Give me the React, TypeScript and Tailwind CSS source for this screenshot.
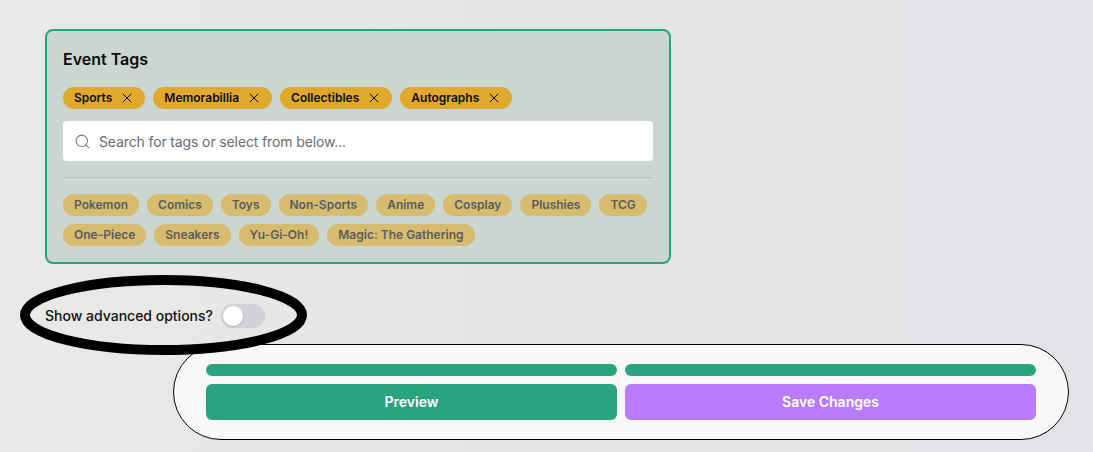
import { Search, X } from 'lucide-react';

const selected = ['Sports', 'Memorabillia', 'Collectibles', 'Autographs'];
const available = ['Pokemon', 'Comics', 'Toys', 'Non-Sports', 'Anime', 'Cosplay', 'Plushies', 'TCG', 'One-Piece', 'Sneakers', 'Yu-Gi-Oh!', 'Magic: The Gathering'];

export default function App() {
  return (
    <div className="relative h-[452px] w-[1093px] overflow-hidden bg-gradient-to-r from-[#e9e9e7] via-[#e4e4e4] to-[#e2e3e7] font-['Inter',sans-serif] pt-[29px]">
      <div className="ml-[45px] h-[235px] w-[626px] rounded-lg border-2 border-[#2aa37f] bg-[#ccd6d1] px-4 pt-[17px]">
        <h2 className="text-base leading-[22px] font-semibold text-[#0a0b0c]">Event Tags</h2>
        <div className="mt-[17px] flex gap-2">
          {selected.map(tag => (
            <span key={tag} className="flex h-[22px] items-center gap-[7px] rounded-full bg-[#e0a92e] pl-[11px] pr-[10px] text-xs font-semibold text-[#0d0d0d]">
              {tag}
              <X size={16} strokeWidth={1.5} className="text-[#111]" />
            </span>
          ))}
        </div>
        <div className="mt-3 flex h-10 items-center gap-2 rounded bg-white pl-[11px]">
          <Search size={17} strokeWidth={1.5} className="text-[#7a7a82]" />
          <span className="pt-px text-sm tracking-[-0.13px] text-[#6b6b76]">Search for tags or select from below...</span>
        </div>
        <div className="mt-4 border-t border-[#b6c2bc]" />
        <div className="mt-4 flex flex-wrap gap-2">
          {available.map(tag => (
            <span key={tag} className="flex h-[22px] items-center rounded-full bg-[#d7bb6e] px-[11px] text-xs font-semibold text-[#5a5b5c]">
              {tag}
            </span>
          ))}
        </div>
      </div>

      <div className="ml-[45px] mt-10 flex h-6 items-center gap-2">
        <span className="text-sm font-medium text-[#111]">Show advanced options?</span>
        <div className="flex h-6 w-11 items-center rounded-full bg-[#d2d2d9] px-[2px]">
          <div className="h-5 w-5 rounded-full bg-white shadow" />
        </div>
      </div>

      <svg className="pointer-events-none absolute left-[15px] top-[270px]" width="297" height="90" viewBox="0 0 297 90">
        <ellipse cx="148.5" cy="45" rx="138.5" ry="35" fill="none" stroke="#000" strokeWidth="10" />
      </svg>

      <div className="ml-[173px] mt-4 flex h-[96px] w-[896px] flex-col gap-2 rounded-[48px] border border-black bg-[#f8f8f8] px-8 pt-[19px]">
        <div className="flex gap-2">
          <div className="h-3 flex-1 rounded-md bg-[#2aa37f]" />
          <div className="h-3 flex-1 rounded-md bg-[#2aa37f]" />
        </div>
        <div className="flex gap-2">
          <button className="h-9 flex-1 rounded-md bg-[#2aa37f] text-sm font-semibold text-white">Preview</button>
          <button className="h-9 flex-1 rounded-md bg-[#b97cff] text-sm font-semibold text-white">Save Changes</button>
        </div>
      </div>
    </div>
  );
}
